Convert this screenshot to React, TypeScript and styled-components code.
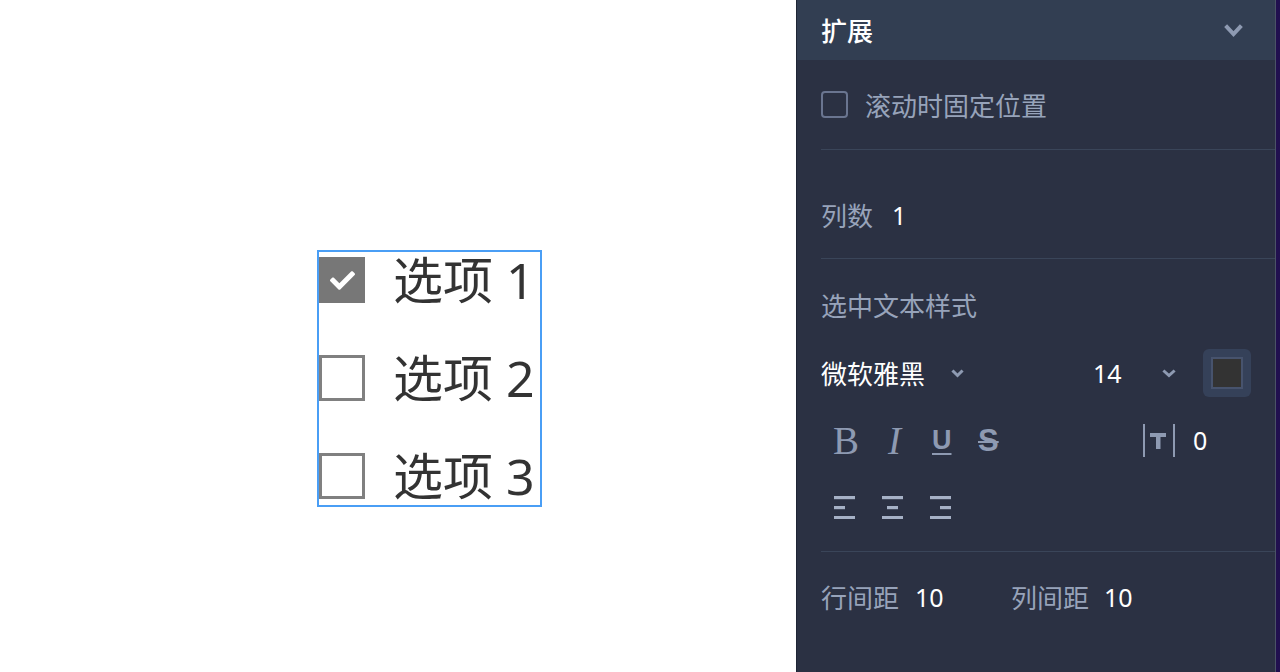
import React from "react";
import styled, { createGlobalStyle } from "styled-components";

const Global = createGlobalStyle`
  html, body { margin: 0; padding: 0; background: #ffffff; }
  body { font-family: "Noto Sans", "Noto Sans CJK SC", sans-serif; overflow: hidden; }
  * { box-sizing: border-box; }
`;

const Page = styled.div`
  display: flex;
  width: 1280px;
  height: 672px;
`;

const Canvas = styled.div`
  width: 796px;
  height: 672px;
  background: #ffffff;
  padding: 250px 0 0 317px;
`;

const Group = styled.div`
  width: 225px;
  border: 2px solid #4a9ef5;
  padding: 5px 0 6px 0;
  display: flex;
  flex-direction: column;
  gap: 52px;
`;

const OptRow = styled.div`
  display: flex;
  align-items: center;
  height: 46px;
  gap: 28px;
`;

const Box = styled.div<{ $checked?: boolean }>`
  width: 46px;
  height: 46px;
  flex: none;
  display: flex;
  align-items: center;
  justify-content: center;
  background: ${(p) => (p.$checked ? "#777777" : "#ffffff")};
  border: ${(p) => (p.$checked ? "none" : "3px solid #808080")};
`;

const OptText = styled.span`
  font-size: 50px;
  line-height: 46px;
  color: #333333;
  white-space: nowrap;
`;

const Panel = styled.div`
  width: 480px;
  height: 672px;
  background: #2b3143;
  border-left: 1px solid #1f2535;
  border-right: 1px solid #4b5366;
  display: flex;
  flex-direction: column;
`;

const Strip = styled.div`
  width: 4px;
  height: 672px;
  background: #21104f;
`;

const Header = styled.div`
  height: 60px;
  background: #323e52;
  display: flex;
  align-items: center;
  justify-content: space-between;
  padding: 0 32px 0 24px;
  color: #ffffff;
  font-size: 26px;
  font-weight: 500;
`;

const Section = styled.div<{ $pt: number; $pb: number }>`
  margin-left: 24px;
  padding-top: ${(p) => p.$pt}px;
  padding-bottom: ${(p) => p.$pb}px;
  display: flex;
  flex-direction: column;
`;

const Divider = styled.div`
  margin-left: 24px;
  height: 1px;
  background: #3a4559;
  flex: none;
`;

const Row = styled.div<{ $h: number; $mt?: number }>`
  height: ${(p) => p.$h}px;
  margin-top: ${(p) => p.$mt || 0}px;
  display: flex;
  align-items: center;
  padding-right: 24px;
`;

const Label = styled.span<{ $w?: number }>`
  font-size: 26px;
  color: #97a3ba;
  white-space: nowrap;
  ${(p) => (p.$w ? `width: ${p.$w}px;` : "")}
`;

const Value = styled.span<{ $w?: number }>`
  font-size: 25px;
  color: #ffffff;
  white-space: nowrap;
  ${(p) => (p.$w ? `width: ${p.$w}px;` : "")}
`;

const CnValue = styled(Value)`
  font-size: 26px;
`;

const SmallBox = styled.div`
  width: 27px;
  height: 27px;
  border: 2px solid #6a7590;
  border-radius: 4px;
  margin-right: 17px;
`;

const Swatch = styled.div`
  width: 48px;
  height: 48px;
  border-radius: 6px;
  background: #354159;
  display: flex;
  align-items: center;
  justify-content: center;
  margin-left: auto;
`;

const SwatchInner = styled.div`
  width: 32px;
  height: 32px;
  background: #333333;
  border: 2px solid #47536d;
`;

const Tool = styled.span<{ $w: number; $pl?: number }>`
  width: ${(p) => p.$w}px;
  padding-left: ${(p) => p.$pl || 0}px;
  display: inline-flex;
  align-items: center;
  color: #8e9ab2;
`;

const SerifGlyph = styled.span<{ $italic?: boolean }>`
  font-family: "Liberation Serif", serif;
  font-size: 39px;
  line-height: 1;
  font-style: ${(p) => (p.$italic ? "italic" : "normal")};
  color: #8e9ab2;
`;

const SansGlyph = styled.span<{ $deco: string; $size: number }>`
  font-family: "Liberation Sans", sans-serif;
  font-weight: 700;
  font-size: ${(p) => p.$size}px;
  line-height: 1;
  color: #8e9ab2;
  text-decoration: ${(p) => p.$deco};
  text-decoration-thickness: 2px;
  text-underline-offset: 4px;
`;

const Chevron = ({ w, h, sw }: { w: number; h: number; sw: number }) => (
  <svg width={w} height={h} viewBox={`0 0 ${w} ${h}`}>
    <polyline
      points={`${sw / 2 + 1},${sw / 2 + 1} ${w / 2},${h - sw / 2 - 1} ${w - sw / 2 - 1},${sw / 2 + 1}`}
      fill="none"
      stroke="#8e9ab2"
      strokeWidth={sw}
      strokeLinecap="square"
    />
  </svg>
);

const AlignIcon = ({ mode }: { mode: "left" | "center" | "right" }) => {
  const mx = mode === "left" ? 0 : mode === "center" ? 5 : 10;
  return (
    <svg width="21" height="24" viewBox="0 0 21 24">
      <rect x="0" y="1" width="21" height="3.2" fill="#a6b1c6" />
      <rect x={mx} y="11" width="11" height="3.2" fill="#a6b1c6" />
      <rect x="0" y="21" width="21" height="3" fill="#a6b1c6" />
    </svg>
  );
};

const Check = () => (
  <svg width="25" height="25" viewBox="0 0 512 512">
    <path
      fill="#ffffff"
      d="M173.898 439.404l-166.4-166.4c-9.997-9.997-9.997-26.206 0-36.204l36.203-36.204c9.997-9.998 26.207-9.998 36.204 0L192 312.69 432.095 72.596c9.997-9.997 26.207-9.997 36.204 0l36.203 36.204c9.997 9.997 9.997 26.206 0 36.204l-294.4 294.401c-9.998 9.997-26.207 9.997-36.204-.001z"
    />
  </svg>
);

const LetterSpacingIcon = () => (
  <svg width="32" height="33" viewBox="0 0 32 33">
    <rect x="0" y="0" width="2" height="33" fill="#8e9ab2" />
    <rect x="30" y="0" width="2" height="33" fill="#8e9ab2" />
    <rect x="7" y="9" width="16" height="4" fill="#8e9ab2" />
    <rect x="13" y="9" width="4.5" height="16" fill="#8e9ab2" />
  </svg>
);

const options = [
  { label: "选项 1", checked: true },
  { label: "选项 2", checked: false },
  { label: "选项 3", checked: false },
];

export default function App() {
  return (
    <>
      <Global />
      <Page>
        <Canvas>
          <Group>
            {options.map((o) => (
              <OptRow key={o.label}>
                <Box $checked={o.checked}>{o.checked && <Check />}</Box>
                <OptText>{o.label}</OptText>
              </OptRow>
            ))}
          </Group>
        </Canvas>
        <Panel>
          <Header>
            <span>扩展</span>
            <Chevron w={19} h={13} sw={4} />
          </Header>
          <Section $pt={0} $pb={0}>
            <Row $h={89}>
              <SmallBox />
              <Label>滚动时固定位置</Label>
            </Row>
          </Section>
          <Divider />
          <Section $pt={45} $pb={23}>
            <Row $h={40}>
              <Label $w={71}>列数</Label>
              <Value>1</Value>
            </Row>
          </Section>
          <Divider />
          <Section $pt={26} $pb={24}>
            <Row $h={40}>
              <Label>选中文本样式</Label>
            </Row>
            <Row $h={48} $mt={24}>
              <CnValue $w={130}>微软雅黑</CnValue>
              <Chevron w={13} h={9} sw={3} />
              <Value style={{ marginLeft: 129 }} $w={69}>14</Value>
              <Chevron w={14} h={9} sw={3} />
              <Swatch>
                <SwatchInner />
              </Swatch>
            </Row>
            <Row $h={40} $mt={23}>
              <Tool $w={65} $pl={12}>
                <SerifGlyph>B</SerifGlyph>
              </Tool>
              <Tool $w={46} $pl={2}>
                <SerifGlyph $italic>I</SerifGlyph>
              </Tool>
              <Tool $w={46}>
                <SansGlyph $deco="underline" $size={27}>U</SansGlyph>
              </Tool>
              <Tool $w={165}>
                <SansGlyph $deco="line-through" $size={31}>S</SansGlyph>
              </Tool>
              <Tool $w={50}>
                <LetterSpacingIcon />
              </Tool>
              <Value>0</Value>
            </Row>
            <Row $h={40} $mt={27} style={{ gap: 27, paddingLeft: 13 }}>
              <AlignIcon mode="left" />
              <AlignIcon mode="center" />
              <AlignIcon mode="right" />
            </Row>
          </Section>
          <Divider />
          <Section $pt={25} $pb={0}>
            <Row $h={40}>
              <Label $w={94}>行间距</Label>
              <Value $w={96}>10</Value>
              <Label $w={93}>列间距</Label>
              <Value>10</Value>
            </Row>
          </Section>
        </Panel>
        <Strip />
      </Page>
    </>
  );
}
